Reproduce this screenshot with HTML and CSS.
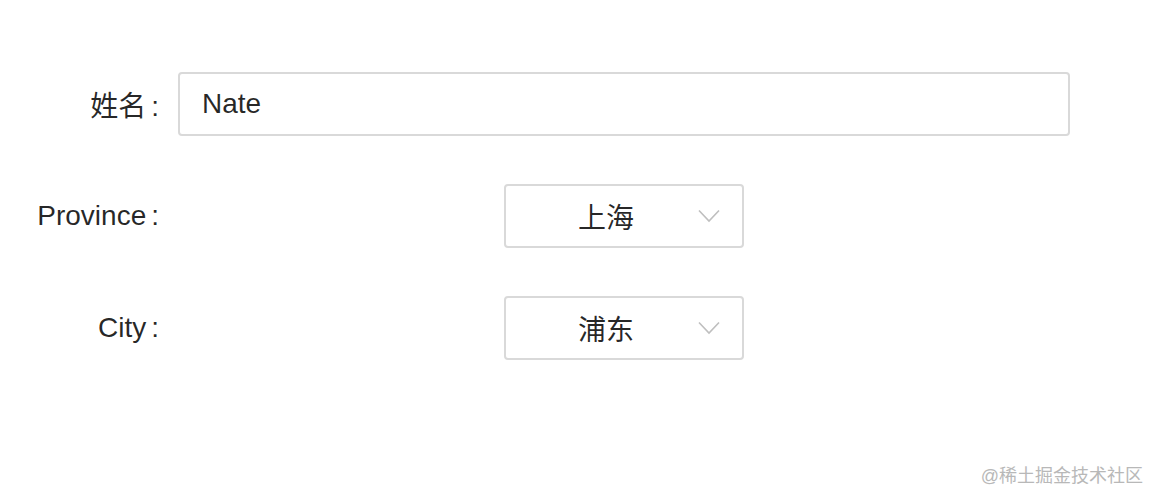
FILE: index.html
```html
<!DOCTYPE html>
<html lang="zh-CN">
<head>
    <meta charset="UTF-8">
    <title>Form</title>
    <link rel="stylesheet" href="styles.css">
</head>
<body>
    <form class="form">
        <!-- Name -->
        <div class="form-row">
            <label class="form-label">姓名</label>
            <div class="form-control">
                <div class="input">Nate</div>
            </div>
        </div>

        <!-- Province -->
        <div class="form-row">
            <label class="form-label">Province</label>
            <div class="form-control center">
                <div class="select">
                    <span class="select-value">上海</span>
                    <svg class="select-arrow" width="22" height="14" viewBox="0 0 22 14">
                        <path d="M1 1.5 L11 12 L21 1.5" fill="none" stroke="#bfbfbf" stroke-width="1.6"/>
                    </svg>
                </div>
            </div>
        </div>

        <!-- City -->
        <div class="form-row">
            <label class="form-label">City</label>
            <div class="form-control center">
                <div class="select">
                    <span class="select-value">浦东</span>
                    <svg class="select-arrow" width="22" height="14" viewBox="0 0 22 14">
                        <path d="M1 1.5 L11 12 L21 1.5" fill="none" stroke="#bfbfbf" stroke-width="1.6"/>
                    </svg>
                </div>
            </div>
        </div>
    </form>

    <div class="watermark">@稀土掘金技术社区</div>
</body>
</html>
```

FILE: styles.css
```css
body {
    margin: 0;
    font-family: "Liberation Sans", "Noto Sans CJK SC", sans-serif;
    color: rgba(0, 0, 0, 0.85);
    background: #fff;
    width: 1160px;
    height: 502px;
    position: relative;
    overflow: hidden;
}

/* Form layout */
.form {
    padding-top: 72px;
}

.form-row {
    display: flex;
    align-items: center;
    height: 64px;
    margin-bottom: 48px;
}

.form-label {
    width: 178px;
    flex: none;
    text-align: right;
    font-size: 28px;
    box-sizing: border-box;
    padding-right: 19px;
    white-space: nowrap;
}

.form-label::after {
    content: ":";
    margin-left: 5px;
}

.form-control {
    width: 892px;
    display: flex;
}

.form-control.center {
    justify-content: center;
}

/* Input */
.input {
    width: 100%;
    height: 64px;
    box-sizing: border-box;
    border: 2px solid #d9d9d9;
    border-radius: 4px;
    padding: 0 22px;
    font-size: 28px;
    display: flex;
    align-items: center;
}

/* Select */
.select {
    width: 240px;
    height: 64px;
    box-sizing: border-box;
    border: 2px solid #d9d9d9;
    border-radius: 4px;
    padding: 0 22px;
    display: flex;
    align-items: center;
    position: relative;
}

.select-value {
    flex: 1;
    text-align: center;
    font-size: 28px;
    padding-right: 36px;
}

.select-arrow {
    position: absolute;
    right: 22px;
    top: 23px;
}

/* Watermark */
.watermark {
    position: absolute;
    right: 17px;
    bottom: 15px;
    font-size: 18px;
    color: #b8b8b8;
}
```
